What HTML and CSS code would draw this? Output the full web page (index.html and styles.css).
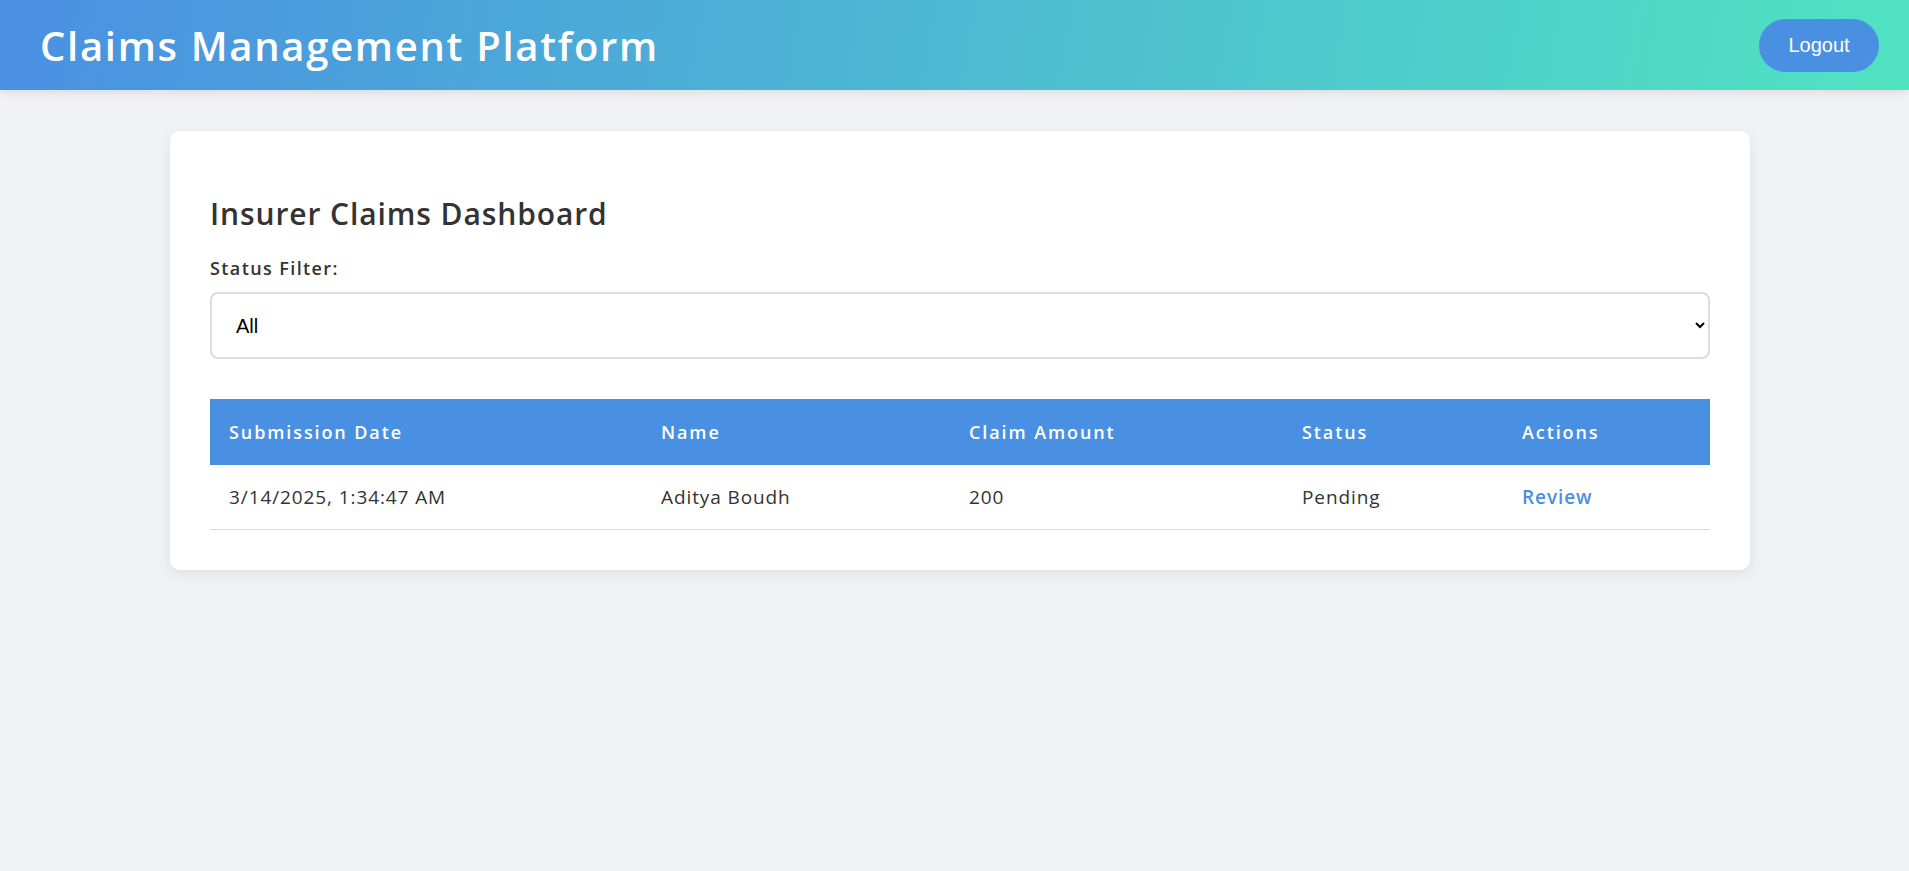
FILE: index.html
```html
<!DOCTYPE html>
<html lang="en">
<head>
<meta charset="utf-8">
<title>Claims Management Platform</title>
<link rel="stylesheet" href="styles.css">
</head>
<body>
<header class="topbar">
  <h1 class="brand">Claims Management Platform</h1>
  <button class="logout">Logout</button>
</header>
<main class="page">
  <section class="card">
    <h2 class="card-title">Insurer Claims Dashboard</h2>
    <div class="filter">
      <label class="filter-label" for="status">Status Filter:</label>
      <select id="status" class="filter-select">
        <option>All</option>
        <option>Pending</option>
        <option>Approved</option>
        <option>Rejected</option>
      </select>
    </div>
    <table class="claims">
      <thead>
        <tr>
          <th class="c-date">Submission Date</th>
          <th class="c-name">Name</th>
          <th class="c-amount">Claim Amount</th>
          <th class="c-status">Status</th>
          <th class="c-actions">Actions</th>
        </tr>
      </thead>
      <tbody>
        <tr>
          <td>3/14/2025, 1:34:47 AM</td>
          <td>Aditya Boudh</td>
          <td>200</td>
          <td>Pending</td>
          <td><a class="review" href="#">Review</a></td>
        </tr>
      </tbody>
    </table>
  </section>
</main>
</body>
</html>
```

FILE: styles.css
```css
* { box-sizing: border-box; }

body {
  margin: 0;
  background: #f0f2f5;
  font-family: "Open Sans", "Noto Sans", sans-serif;
  color: #333;
}

.topbar {
  height: 90px;
  display: flex;
  align-items: center;
  justify-content: space-between;
  padding: 0 30px 0 40px;
  background: linear-gradient(100deg, #4a90e2 0%, #50e3c2 100%);
  box-shadow: 0 2px 10px rgba(0, 0, 0, 0.1);
}

.brand {
  margin: 0;
  color: #fff;
  font-size: 40px;
  font-weight: 600;
  letter-spacing: 1.7px;
}

.logout {
  height: 53px;
  width: 120px;
  padding: 0;
  border: none;
  border-radius: 27px;
  background: #4a90e2;
  color: #fff;
  font-family: "Liberation Sans", Arial, sans-serif;
  font-size: 20px;
  cursor: pointer;
}

.page {
  padding: 41px 0;
}

.card {
  width: 1580px;
  margin: 0 0 0 170px;
  background: #fff;
  border-radius: 10px;
  padding: 40px;
  box-shadow: 0 4px 14px rgba(0, 0, 0, 0.08);
}

.card-title {
  margin: 26px 0 26px;
  font-size: 30px;
  font-weight: 600;
  line-height: 34px;
  letter-spacing: 0.9px;
  color: #333;
}

.filter {
  display: flex;
  flex-direction: column;
  gap: 13px;
  margin-bottom: 40px;
}

.filter-label {
  font-size: 18px;
  font-weight: 600;
  line-height: 22px;
  letter-spacing: 1.4px;
}

.filter-select {
  height: 67px;
  width: 100%;
  padding: 0 20px;
  border: 2px solid #ddd;
  border-radius: 8px;
  background: #fff;
  font-family: "Liberation Sans", Arial, sans-serif;
  font-size: 20px;
  color: #000;
}

.claims {
  width: 100%;
  border-collapse: collapse;
  table-layout: fixed;
}

.claims th,
.claims td {
  text-align: left;
  padding: 0 19px;
}

.claims th {
  height: 66px;
  background: #4a90e2;
  color: #fff;
  font-size: 18px;
  font-weight: 600;
  letter-spacing: 1.9px;
}

.claims td {
  height: 64px;
  border-bottom: 1px solid #ddd;
  color: #333;
  font-size: 19px;
  font-weight: 400;
  letter-spacing: 0.9px;
}

.c-date { width: 432px; }
.c-name { width: 308px; }
.c-amount { width: 333px; }
.c-status { width: 220px; }

.review {
  color: #4a90e2;
  font-weight: 600;
  text-decoration: none;
}
```
